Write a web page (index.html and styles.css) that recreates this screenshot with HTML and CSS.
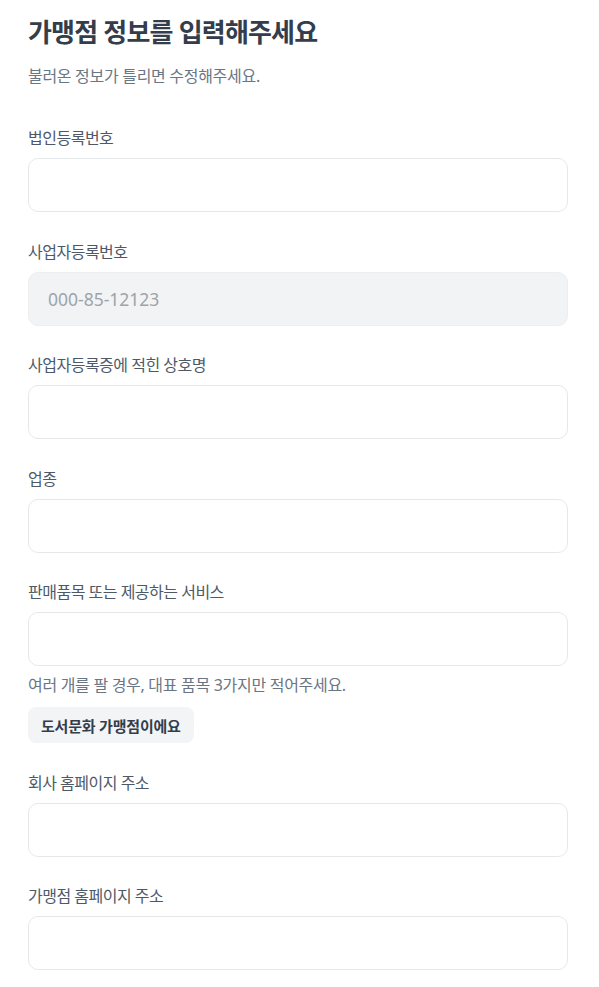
FILE: index.html
```html
<!DOCTYPE html>
<html lang="ko">
<head>
<meta charset="utf-8">
<title>가맹점 정보 입력</title>
<link rel="stylesheet" href="styles.css">
</head>
<body>
<main class="page">
  <h1 class="title">가맹점 정보를 입력해주세요</h1>
  <p class="subtitle">불러온 정보가 틀리면 수정해주세요.</p>

  <form class="form">
    <div class="field">
      <label class="label" for="f1">법인등록번호</label>
      <input class="input" id="f1" type="text">
    </div>
    <div class="field">
      <label class="label" for="f2">사업자등록번호</label>
      <input class="input input-disabled" id="f2" type="text" placeholder="000-85-12123" disabled>
    </div>
    <div class="field">
      <label class="label" for="f3">사업자등록증에 적힌 상호명</label>
      <input class="input" id="f3" type="text">
    </div>
    <div class="field">
      <label class="label" for="f4">업종</label>
      <input class="input" id="f4" type="text">
    </div>
    <div class="field">
      <label class="label" for="f5">판매품목 또는 제공하는 서비스</label>
      <input class="input" id="f5" type="text">
      <p class="helper">여러 개를 팔 경우, 대표 품목 3가지만 적어주세요.</p>
      <button class="chip" type="button">도서문화 가맹점이에요</button>
    </div>
    <div class="field">
      <label class="label" for="f6">회사 홈페이지 주소</label>
      <input class="input" id="f6" type="text">
    </div>
    <div class="field">
      <label class="label" for="f7">가맹점 홈페이지 주소</label>
      <input class="input" id="f7" type="text">
    </div>
  </form>
</main>
</body>
</html>
```

FILE: styles.css
```css
* {
  box-sizing: border-box;
}

html, body {
  margin: 0;
  padding: 0;
  background: #ffffff;
}

body {
  font-family: "Noto Sans", "Noto Sans CJK KR", sans-serif;
  color: #4e5968;
}

.page {
  width: 540px;
  margin-left: 28px;
  padding-top: 16px;
}

.title {
  margin: 0;
  font-size: 26px;
  line-height: 32px;
  font-weight: 700;
  letter-spacing: -0.8px;
  color: #333d4b;
}

.subtitle {
  margin: 17px 0 0;
  font-size: 16px;
  line-height: 22px;
  letter-spacing: -0.3px;
  color: #6b7684;
}

.form {
  display: flex;
  flex-direction: column;
  gap: 28.5px;
  margin-top: 40px;
}

.field {
  display: flex;
  flex-direction: column;
  align-items: flex-start;
}

.label {
  font-size: 16px;
  line-height: 22px;
  letter-spacing: -0.5px;
  color: #4e5968;
  margin-bottom: 9px;
}

.input {
  width: 100%;
  height: 54px;
  border: 1px solid #e5e8eb;
  border-radius: 10px;
  background: #ffffff;
  padding: 0 19px;
  font-family: "Noto Sans", "Noto Sans CJK KR", sans-serif;
  font-size: 17.5px;
  color: #333d4b;
  outline: none;
}

.input-disabled {
  background: #f2f3f5;
  border-color: #eceef0;
}

.input-disabled::placeholder {
  color: #9ea4aa;
  opacity: 1;
}

.helper {
  margin: 8px 0 0;
  font-size: 16px;
  line-height: 22px;
  letter-spacing: -0.3px;
  color: #6b7684;
}

.chip {
  margin-top: 11px;
  height: 36px;
  padding: 0 13px;
  border: none;
  border-radius: 8px;
  background: #f2f4f6;
  font-family: "Noto Sans", "Noto Sans CJK KR", sans-serif;
  font-size: 15px;
  font-weight: 700;
  letter-spacing: -0.2px;
  color: #333d4b;
}
```
